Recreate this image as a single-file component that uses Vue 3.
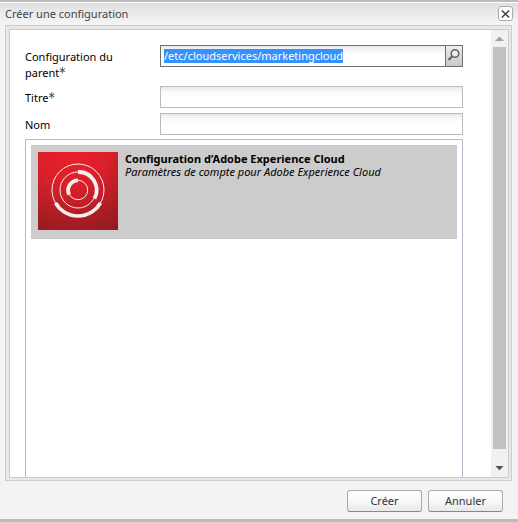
<script setup>
import { onMounted, ref } from 'vue'

const parentPath = ref('/etc/cloudservices/marketingcloud')
const title = ref('')
const name = ref('')
const parentInput = ref(null)

onMounted(() => {
  parentInput.value.focus()
  parentInput.value.select()
})
</script>

<template>
  <form class="dialog" role="dialog" aria-labelledby="dialog-title" @submit.prevent>
    <header class="header">
      <h1 id="dialog-title">Créer une configuration</h1>
      <button class="close" type="button" aria-label="Fermer">
        <svg width="9" height="8" viewBox="0 0 9 8">
          <path d="M.8.5 8.2 7.5M8.2.5.8 7.5" fill="none" stroke="#444" stroke-width="1.5" />
        </svg>
      </button>
    </header>

    <div class="frame">
      <div class="body">
        <div class="content">
          <div class="fields">
            <div class="row">
              <label for="parent">Configuration du parent<span class="star">*</span></label>
              <div class="field combo">
                <input id="parent" ref="parentInput" v-model="parentPath" type="text" spellcheck="false" />
                <button class="search" type="button" aria-label="Parcourir">
                  <svg width="14" height="16" viewBox="0 0 14 16">
                    <circle cx="8" cy="5.500" r="3.800" fill="#eee" stroke="#666" stroke-width="1.600" />
                    <path d="M5.300 8.200 1.500 12" stroke="#666" stroke-width="2.200" fill="none" />
                  </svg>
                </button>
              </div>
            </div>
            <div class="row">
              <label for="title">Titre<span class="star">*</span></label>
              <div class="field"><input id="title" v-model="title" type="text" /></div>
            </div>
            <div class="row">
              <label for="name">Nom</label>
              <div class="field"><input id="name" v-model="name" type="text" /></div>
            </div>
          </div>

          <div class="list">
            <article class="item">
              <svg class="logo" width="80" height="78" viewBox="0 0 80 78">
                <defs>
                  <radialGradient id="red" cx=".42" cy="0" r="1.15">
                    <stop offset="0" stop-color="#ec1f2b" />
                    <stop offset=".4" stop-color="#d8202a" />
                    <stop offset="1" stop-color="#8c1b1f" />
                  </radialGradient>
                </defs>
                <rect width="80" height="78" fill="url(#red)" />
                <g fill="none" stroke="#f6eeee">
                  <circle cx="40" cy="38" r="26" stroke-width="1" />
                  <circle cx="40" cy="38" r="18" stroke-width="1" />
                  <circle cx="40" cy="38" r="9.700" stroke-width="1" />
                  <path d="M17.500 51A26 26 0 0 0 62.500 51" stroke-width="3.600" />
                  <path d="M40 20A18 18 0 0 1 56.500 46.500" stroke-width="3.800" />
                  <path d="M40 28.300A9.900 9.900 0 0 0 31.200 42.600" stroke-width="3.800" />
                </g>
              </svg>
              <div class="text">
                <h2>Configuration d’Adobe Experience Cloud</h2>
                <p>Paramètres de compte pour Adobe Experience Cloud</p>
              </div>
            </article>
          </div>
        </div>

        <div class="scrollbar" aria-hidden="true">
          <svg width="17" height="17" viewBox="0 0 17 17">
            <path d="M4 11 8.500 6.500 13 11z" fill="#a3a3a3" />
          </svg>
          <div class="track"><div class="thumb"></div></div>
          <svg class="down" width="17" height="17" viewBox="0 0 17 17">
            <path d="M4.500 6h8L8.500 10.300z" fill="#505050" />
          </svg>
        </div>
      </div>
    </div>

    <footer class="footer">
      <button class="action" type="submit">Créer</button>
      <button class="action" type="button">Annuler</button>
    </footer>
  </form>
</template>

<style>
body {
  margin: 0;
}
</style>

<style scoped>
* {
  box-sizing: border-box;
}

.dialog {
  display: flex;
  flex-direction: column;
  height: 100vh;
  padding: 0 6px 0 5px;
  border-top: 2px solid #bbb;
  border-bottom: 3px solid #bbb;
  background: linear-gradient(#fff 0 1px, #e0e0e0 1px, #f3f3f3 20px);
  color: #000;
  font: 11px/16px "Noto Sans", sans-serif;
}

.header {
  display: flex;
  align-items: center;
  justify-content: space-between;
  flex: none;
  height: 23px;
}

h1 {
  margin: 0;
  color: #444;
  font-size: 11px;
  font-weight: 400;
}

button {
  display: flex;
  align-items: center;
  justify-content: center;
  padding: 0;
  font: inherit;
}

.close {
  width: 15px;
  height: 15px;
  margin-right: -1px;
  border: 1px solid #aaa;
  border-radius: 3px;
  background: #fff;
}

.frame {
  display: flex;
  flex: 1;
  min-height: 0;
  padding: 3px 2px 2px 3px;
  border: 1px solid #ccc;
  background: #e8e8e8;
}

.body {
  display: flex;
  flex: 1;
  min-width: 0;
  border: 1px solid #ccc;
  background: #fff;
}

.content {
  display: flex;
  flex: 1;
  flex-direction: column;
  min-width: 0;
  overflow: hidden;
  padding: 15px 28px 0 15px;
}

.fields {
  display: flex;
  flex-direction: column;
  flex: none;
  gap: 5px;
  padding-bottom: 4px;
}

.row {
  display: flex;
  align-items: flex-start;
}

label {
  width: 135px;
  padding: 4px 40px 0 0;
}

.star {
  color: #333;
  font-family: "DejaVu Sans Condensed", sans-serif;
  font-size: 14px;
  line-height: 1px;
}

.field {
  display: flex;
  flex: 1;
  min-width: 0;
  height: 22px;
  border: 1px solid #bbb;
}

.combo {
  border-color: #707070;
}

input {
  flex: 1;
  width: 100%;
  min-width: 0;
  padding: 0 3px;
  border: 0;
  border-radius: 0;
  outline: 0;
  background: linear-gradient(#e4e9e9, #f6f8f8 4px, #fff 9px);
  color: #000;
  font: inherit;
  line-height: 14px;
}

input::selection {
  background: rgb(51 144 255 / 0.99);
  color: #fff;
}

.search {
  width: 17px;
  border: 0;
  border-left: 1px solid #707070;
  background: linear-gradient(#eee, #c8c8c8);
}

.list {
  flex: 1;
  padding: 5px;
  border: 1px solid #b5b8c8;
  border-bottom: 0;
}

.item {
  display: flex;
  gap: 7px;
  height: 94px;
  padding: 7px;
  background: #ccc;
}

.logo {
  flex: none;
}

.text {
  font-size: 11px;
  line-height: 13px;
}

h2,
p {
  margin: 0;
  font-size: 11px;
}

p {
  font-style: italic;
}

.scrollbar {
  display: flex;
  flex-direction: column;
  width: 17px;
  background: #f1f1f1;
}

.scrollbar svg {
  flex: none;
}

.scrollbar .down {
  height: 28px;
  padding-top: 11px;
}

.track {
  flex: 1;
  padding: 0 2px;
}

.thumb {
  height: 100%;
  background: #c1c1c1;
}

.footer {
  display: flex;
  justify-content: flex-end;
  flex: none;
  gap: 6px;
  padding: 9px 9px 7px;
}

.action {
  width: 75px;
  height: 22px;
  border: 1px solid #aaa;
  border-bottom-color: #888;
  border-radius: 3px;
  background: linear-gradient(#fff, #f8f8f8 50%, #e8e8e8);
  color: #333;
}
</style>
